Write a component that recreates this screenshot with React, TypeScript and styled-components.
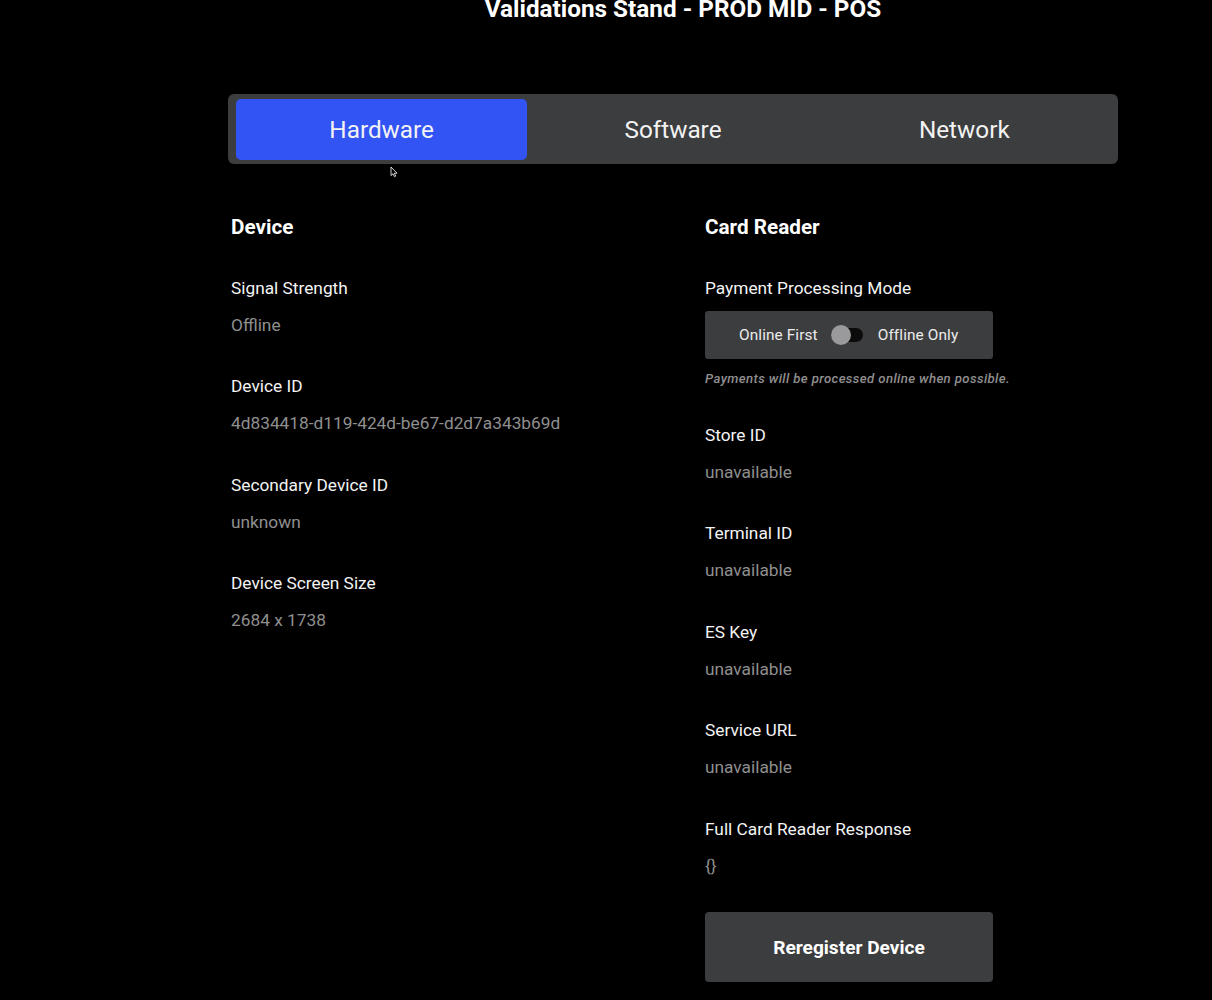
import React from 'react';
import styled, { createGlobalStyle } from 'styled-components';

const GlobalStyle = createGlobalStyle`
  html, body {
    margin: 0;
    padding: 0;
    background: #000;
    height: 1000px;
    overflow: hidden;
  }
  body {
    font-family: Roboto, "Liberation Sans", sans-serif;
    color: #fff;
  }
`;

const hardwareFields = [
  { label: 'Signal Strength', value: 'Offline' },
  { label: 'Device ID', value: '4d834418-d119-424d-be67-d2d7a343b69d' },
  { label: 'Secondary Device ID', value: 'unknown' },
  { label: 'Device Screen Size', value: '2684 x 1738' },
];

const readerFields = [
  { label: 'Store ID', value: 'unavailable' },
  { label: 'Terminal ID', value: 'unavailable' },
  { label: 'ES Key', value: 'unavailable' },
  { label: 'Service URL', value: 'unavailable' },
  { label: 'Full Card Reader Response', value: '{}' },
];

const tabs = ['Hardware', 'Software', 'Network'];

const App = () => {
  return (
    <Page>
      <GlobalStyle />
      <Title>Validations Stand - PROD MID - POS</Title>
      <TabBar>
        {tabs.map((tab, i) => (
          <Tab key={tab} $active={i === 0}>
            {tab}
          </Tab>
        ))}
        <Cursor viewBox="0 0 8 12" aria-hidden="true">
          <path d="M1 1v8.6l2-1.9 1.4 3 1.3-.6-1.4-2.9H7z" fill="#000" stroke="#fff" strokeWidth="0.8" />
        </Cursor>
      </TabBar>
      <Columns>
        <Column>
          <Heading>Device</Heading>
          {hardwareFields.map((f) => (
            <Field key={f.label}>
              <Label>{f.label}</Label>
              <Value>{f.value}</Value>
            </Field>
          ))}
        </Column>
        <Column>
          <Heading>Card Reader</Heading>
          <ModeBlock>
            <Label>Payment Processing Mode</Label>
            <ModeBox>
              <ModeText>Online First</ModeText>
              <Switch>
                <Knob />
              </Switch>
              <ModeText>Offline Only</ModeText>
            </ModeBox>
            <Hint>Payments will be processed online when possible.</Hint>
          </ModeBlock>
          {readerFields.map((f) => (
            <Field key={f.label}>
              <Label>{f.label}</Label>
              <Value>{f.value}</Value>
            </Field>
          ))}
          <ActionButton>Reregister Device</ActionButton>
        </Column>
      </Columns>
    </Page>
  );
};
export default App;

const Page = styled.div`
  width: 890px;
  margin-left: 228px;
  display: flex;
  flex-direction: column;
`;

const Title = styled.h1`
  margin: -5px 0 0 20px;
  height: 99px;
  font-size: 24.3px;
  line-height: 28px;
  font-weight: 700;
  text-align: center;
  color: #fff;
`;

const TabBar = styled.div`
  position: relative;
  box-sizing: border-box;
  height: 70px;
  padding: 5px 8px 4px;
  display: grid;
  grid-template-columns: repeat(3, 1fr);
  background: #3c3d3f;
  border-radius: 6px;
`;

const Tab = styled.div<{ $active: boolean }>`
  display: flex;
  align-items: center;
  justify-content: center;
  font-size: 24.3px;
  background: ${({ $active }) => ($active ? '#3354f4' : 'transparent')};
  border-radius: 5px;
  color: #f2f2f2;
`;

const Cursor = styled.svg`
  position: absolute;
  left: 162px;
  top: 72px;
  width: 8px;
  height: 12px;
`;

const Columns = styled.div`
  display: grid;
  grid-template-columns: 474px 1fr;
  padding: 49px 0 0 3px;
`;

const Column = styled.section`
  display: flex;
  flex-direction: column;
  align-items: flex-start;
`;

const Heading = styled.h2`
  margin: 0 0 34px;
  font-size: 20.7px;
  line-height: 28px;
  font-weight: 700;
`;

const Field = styled.div`
  height: 98.4px;
`;

const Label = styled.div`
  font-size: 17.3px;
  line-height: 27px;
  color: #f4f4f4;
`;

const Value = styled.div`
  margin-top: 10px;
  font-size: 17.3px;
  line-height: 26px;
  color: #8f8f8f;
`;

const ModeBlock = styled.div`
  height: 147px;
`;

const ModeBox = styled.div`
  box-sizing: border-box;
  width: 288px;
  height: 48px;
  margin-top: 9px;
  padding-left: 34px;
  display: flex;
  align-items: center;
  background: #3c3d3f;
  border-radius: 3px;
`;

const ModeText = styled.span`
  font-size: 15.4px;
  letter-spacing: 0.1px;
  color: #ececec;
`;

const Switch = styled.span`
  position: relative;
  display: block;
  width: 32px;
  height: 14px;
  margin: 0 15px 0 13px;
  background: #0b0b0c;
  border-radius: 7px;
`;

const Knob = styled.span`
  position: absolute;
  left: 0;
  top: -3px;
  width: 20px;
  height: 20px;
  border-radius: 50%;
  background: #9a9a9d;
`;

const Hint = styled.div`
  margin-top: 10px;
  font-size: 13.2px;
  line-height: 20px;
  font-style: italic;
  font-weight: 500;
  letter-spacing: 0.38px;
  color: #8f8f8f;
`;

const ActionButton = styled.button`
  width: 288px;
  height: 70px;
  margin-top: -1.5px;
  border: none;
  border-radius: 4px;
  background: #3c3d3f;
  color: #fff;
  font-family: inherit;
  font-size: 19.1px;
  font-weight: 700;
`;
